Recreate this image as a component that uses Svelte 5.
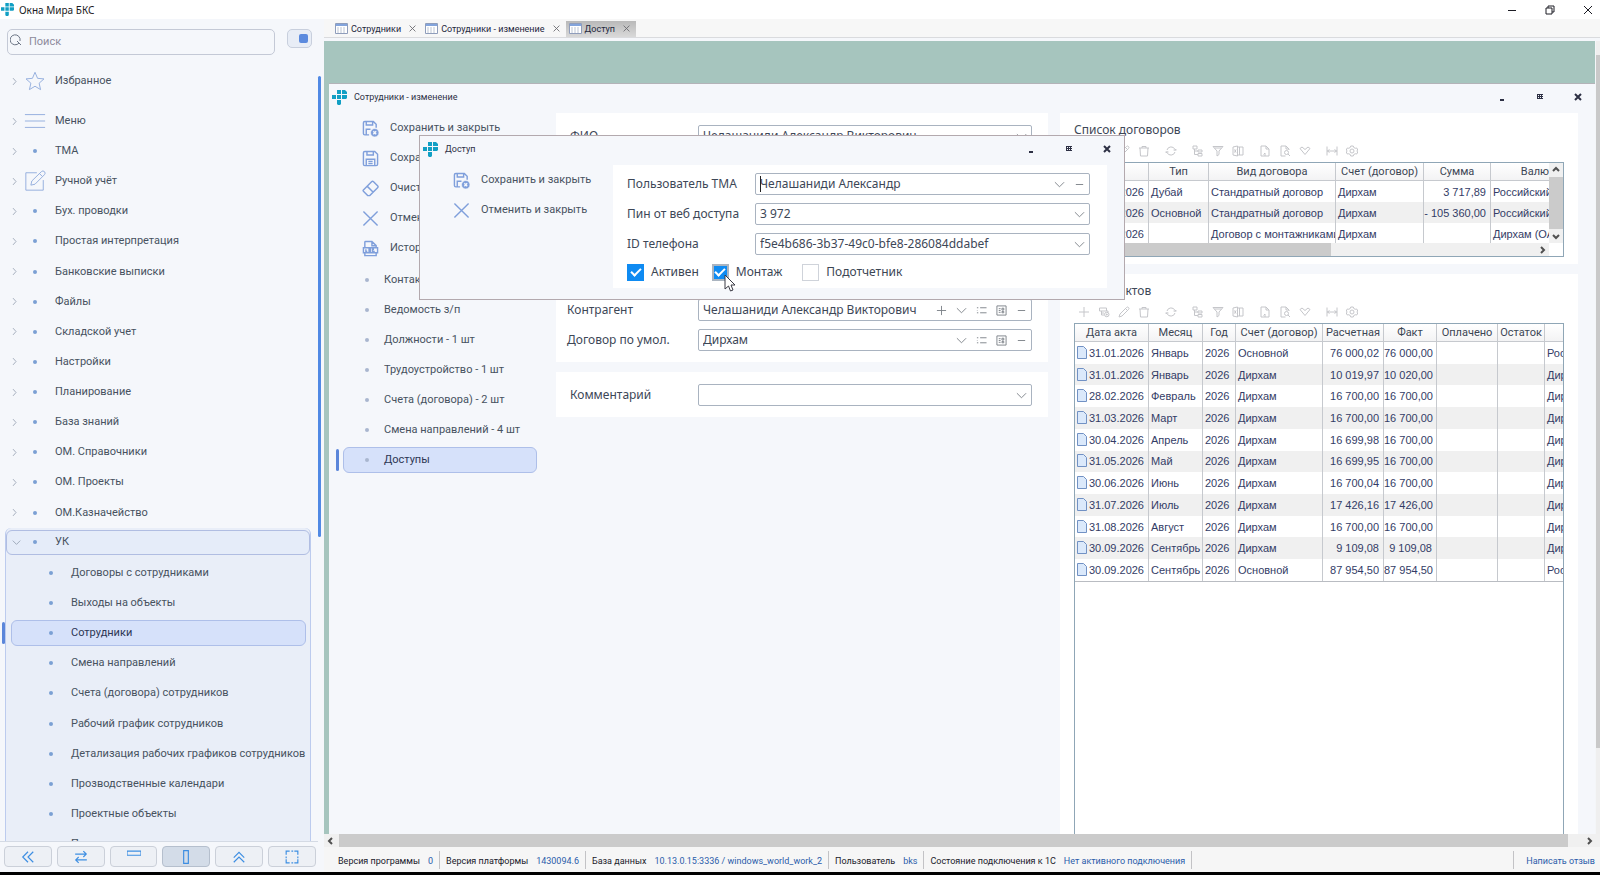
<script>
    const icons = {
        star: "M12 2.5l2.8 6.6 7 .6-5.3 4.7 1.6 7-6.1-3.7-6.1 3.7 1.6-7L2.2 9.7l7-.6z",
        menu: "M1 5h22M1 12h22M1 19h22",
        edit: "M14 3H2v19h19V11M7.500 16.500l1-4.500L19 1.800a2 2 0 0 1 3.300 3.300L12 15.500zM17 4l3 3",
        saveClose: "M10 21H4a2 2 0 0 1-2-2V4a2 2 0 0 1 2-2h12l4 4v5M6 2v5h9V2M6 21v-8h6",
        save: "M2 4a2 2 0 0 1 2-2h14l4 4v14a2 2 0 0 1-2 2H4a2 2 0 0 1-2-2zM7 2v5h9V2M6 22v-9h12v9M9 16h6M9 19h6",
        erase: "M2 14L13.500 2.500a2 2 0 0 1 2.800 0L22 8.200a2 2 0 0 1 0 2.800L11 22H8l-6-6a1.500 1.500 0 0 1 0-2zM7.500 9l8 8",
        cross: "M2 2l20 20M22 2L2 22",
        log: "M4 10V3a1 1 0 0 1 1-1h9l6 6v2M14 2v6h6M2 11h20v7H2zM4 18v4h16v-4M5.500 13v3h2M10 13h2v3h-2zM17 13h-2v3h2v-1",
        plus: "M12 2v20M2 12h20",
        minus: "M4 12h16",
        down: "M2 7l10 10L22 7",
        right: "M8 3l8 9-8 9",
        list: "M2 6h3M2 12h1M2 17h3M9 6h14M9 17h14",
        card: "M2 2h20v20H2zM6 8h4M6 12h4M6 16h4M13 7h4v4h-4zM13 14h4v3h-4z",
        copy: "M3 4h14v6H3zM7 10v4h5M7 14v4h5M17 10h3v3M13 17a4.500 4.500 0 1 0 9 0a4.500 4.500 0 1 0-9 0M17.500 15v4M15.500 17h4",
        pencil: "M2 22l2-6L17 3a2.500 2.500 0 0 1 4 4L8 20zM15 5l4 4",
        trash: "M2 6h20M8 6V3h8v3M4 6l1 16h14l1-16",
        refresh: "M4 10A8.500 8.500 0 0 1 20 9M20 14A8.500 8.500 0 0 1 4 15M17 10h6M1 14h6M20 11l2-3M4 13l-2 3",
        tree: "M2 2h8v6H2zM5 8v11h7M5 12h7M12 10h8v4h-8zM12 17h8v5h-8z",
        filter: "M2 3h20l-8 9v7l-4 3V12zM5 6h14",
        excel: "M10 4h12v16H10M2 4l9-2v20l-9-2zM5 9l3 6M8 9l-3 6M15 4v16",
        doc: "M4 2h10l6 6v14H4zM14 2v6h6M12 22v-6l-3 3",
        find: "M20 10V8l-6-6H4v20h9M14 2v6h6M11 15a4 4 0 1 0 8 0a4 4 0 1 0-8 0M18 18l4 4",
        heart: "M2 7l4-3 6 5 6-5 4 3-10 12z",
        width: "M2 3v18M22 3v18M2 12h20M7 9l-4 3 4 3M17 9l4 3-4 3",
        gear: "M9.500 2h5l1 3 3 1.500 3-.5 2 4-2 2 2 2-2 4-3-.5-3 1.500-1 3h-5l-1-3-3-1.500-3 .5-2-4 2-2-2-2 2-4 3 .5 3-1.500zM8 12a4 4 0 1 0 8 0a4 4 0 1 0-8 0",
        collapse: "M12 3l-9 9 9 9M21 3l-9 9 9 9",
        swap: "M2 7h19M16 2l5 5-5 5M22 17H3M8 12l-5 5 5 5",
        bar: "M0 2h24v7H0z",
        column: "M8 1h8v22H8z",
        up: "M3 13l9-9 9 9M3 21l9-9 9 9",
        expand: "M2 8V2h6M16 2h6v6M22 16v6h-6M8 22H2v-6M11 2h3M11 22h3M2 11v3M22 11v3",
    };

    const sections = [
        { name: "ТМА" },
        { name: "Ручной учёт", icon: "edit" },
        { name: "Бух. проводки" },
        { name: "Простая интерпретация" },
        { name: "Банковские выписки" },
        { name: "Файлы" },
        { name: "Складской учет" },
        { name: "Настройки" },
        { name: "Планирование" },
        { name: "База знаний" },
        { name: "ОМ. Справочники" },
        { name: "ОМ. Проекты" },
        { name: "ОМ.Казначейство" },
    ];

    const subsections = [
        "Договоры с сотрудниками",
        "Выходы на объекты",
        "Сотрудники",
        "Смена направлений",
        "Счета (договора) сотрудников",
        "Рабочий график сотрудников",
        "Детализация рабочих графиков сотрудников",
        "Прозводственные календари",
        "Проектные объекты",
    ];

    const tabs = ["Сотрудники", "Сотрудники - изменение", "Доступ"];

    const actions = [
        ["saveClose", "Сохранить и закрыть"],
        ["save", "Сохранить"],
        ["erase", "Очистить"],
        ["cross", "Отменить"],
        ["log", "История"],
    ];

    const pages = [
        "Контакты",
        "Ведомость з/п",
        "Должности - 1 шт",
        "Трудоустройство - 1 шт",
        "Счета (договора) - 2 шт",
        "Смена направлений - 4 шт",
        "Доступы",
    ];

    const toolGroups = [
        ["plus", "copy", "pencil", "trash"],
        ["refresh"],
        ["tree", "filter", "excel"],
        ["doc", "find", "heart"],
        ["width", "gear"],
    ];

    const contractHead = ["Дата", "Тип", "Вид договора", "Счет (договор)", "Сумма", "Валюта"];
    const contracts = [
        ["01.01.2026", "Дубай", "Стандратный договор", "Дирхам", "3 717,89", "Российский рубль"],
        ["01.01.2026", "Основной", "Стандратный договор", "Дирхам", "- 105 360,00", "Российский рубль"],
        ["01.01.2026", "", "Договор с монтажниками", "Дирхам", "", "Дирхам (ОАЭ)"],
    ];

    const actHead = ["Дата акта", "Месяц", "Год", "Счет (договор)", "Расчетная", "Факт", "Оплачено", "Остаток", ""];
    const acts = [
        ["31.01.2026", "Январь", "2026", "Основной", "76 000,02", "76 000,00", "", "", "Российский"],
        ["31.01.2026", "Январь", "2026", "Дирхам", "10 019,97", "10 020,00", "", "", "Дирхам"],
        ["28.02.2026", "Февраль", "2026", "Дирхам", "16 700,00", "16 700,00", "", "", "Дирхам"],
        ["31.03.2026", "Март", "2026", "Дирхам", "16 700,00", "16 700,00", "", "", "Дирхам"],
        ["30.04.2026", "Апрель", "2026", "Дирхам", "16 699,98", "16 700,00", "", "", "Дирхам"],
        ["31.05.2026", "Май", "2026", "Дирхам", "16 699,95", "16 700,00", "", "", "Дирхам"],
        ["30.06.2026", "Июнь", "2026", "Дирхам", "16 700,04", "16 700,00", "", "", "Дирхам"],
        ["31.07.2026", "Июль", "2026", "Дирхам", "17 426,16", "17 426,00", "", "", "Дирхам"],
        ["31.08.2026", "Август", "2026", "Дирхам", "16 700,00", "16 700,00", "", "", "Дирхам"],
        ["30.09.2026", "Сентябрь", "2026", "Дирхам", "9 109,08", "9 109,08", "", "", "Дирхам"],
        ["30.09.2026", "Сентябрь", "2026", "Основной", "87 954,50", "87 954,50", "", "", "Российский"],
    ];

    const status = [
        ["Версия программы", "0"],
        ["Версия платформы", "1430094.6"],
        ["База данных", "10.13.0.15:3336 / windows_world_work_2"],
        ["Пользователь", "bks"],
        ["Состояние подключения к 1С", "Нет активного подключения"],
    ];

    const layoutButtons = ["collapse", "swap", "bar", "column", "up", "expand"];

    let selectedSection = $state("Сотрудники");
    let selectedPage = $state("Доступы");
    let active = $state(true);
    let mounting = $state(true);
    let accountable = $state(false);
</script>

{#snippet icon(name)}
    <svg class="icon" viewBox="0 0 24 24" aria-hidden="true">
        <path d={icons[name]} />
        {#if name === "saveClose"}
            <circle class="badge" cx="18" cy="18" r="6" />
            <path class="badge-cross" d="M16 16l4 4M20 16l-4 4" />
        {/if}
    </svg>
{/snippet}

{#snippet logo()}
    <svg class="logo" viewBox="0 0 15 15" aria-hidden="true">
        <path d="M5 0h4v4H5zM10 0h3l2 2v2h-5zM0 5h4v4H0zM5 5h4v4H5zM10 5h5v3l-1 1h-4zM5 10h4v4l-1 1H6l-1-1z" />
    </svg>
{/snippet}

{#snippet windowBar(title)}
    <header class="window-bar">
        {@render logo()}
        <span class="window-title">{title}</span>
        <button type="button" aria-label="Свернуть"><svg viewBox="0 0 8 8"><path d="M2 7h4" /></svg></button>
        <button type="button" aria-label="Развернуть"><svg class="thin" viewBox="0 0 8 8"><path d="M1 1.500h6M1 3.500h6M1 5.500h6M1.500 1v5M3.500 1v5M5.500 1v5" /></svg></button>
        <button type="button" aria-label="Закрыть"><svg viewBox="0 0 8 8"><path d="M1 1l6 6M7 1L1 7" /></svg></button>
    </header>
{/snippet}

{#snippet field(id, label, value, buttons, focused = false)}
    <div class="form-row">
        <label for={id}>{label}</label>
        <div class="field">
            {#if focused}<i class="caret"></i>{/if}
            <input {id} type="text" {value} />
            {#each buttons as name}
                <button type="button" aria-label={name}>{@render icon(name)}</button>
            {/each}
        </div>
    </div>
{/snippet}

{#snippet tools()}
    <div class="tools">
        {#each toolGroups as group}
            <div class="tool-group">
                {#each group as name}
                    <button type="button" aria-label={name}>{@render icon(name)}</button>
                {/each}
            </div>
        {/each}
    </div>
{/snippet}

{#snippet scrollArrow(d)}
    <svg class="scroll-arrow" viewBox="0 0 8 8" aria-hidden="true"><path {d} /></svg>
{/snippet}

<div class="app">
    <header class="title-bar">
        {@render logo()}
        <h1>Окна Мира БКС</h1>
        <button type="button" aria-label="Свернуть"><svg viewBox="0 0 10 10"><path d="M1 5.500h8" /></svg></button>
        <button type="button" aria-label="Восстановить"><svg viewBox="0 0 10 10"><path d="M1 3h6v6H1zM3 3V1h6v6H7" /></svg></button>
        <button type="button" aria-label="Закрыть"><svg viewBox="0 0 10 10"><path d="M1 1l8 8M9 1L1 9" /></svg></button>
    </header>

    <div class="body">
        <aside class="sidebar">
            <div class="search-row">
                <div class="search">
                    <svg viewBox="0 0 12 12" aria-hidden="true"><path d="M9 9a5 5 0 1 1 1-2M7 7l4 4" /></svg>
                    <input type="search" placeholder="Поиск" aria-label="Поиск" />
                </div>
                <button type="button" class="toggle" aria-label="Закрепить"><i></i></button>
            </div>

            <nav class="tree">
                <button type="button" class="tree-row favorites">
                    <span class="chevron">{@render icon("right")}</span>
                    <span class="mark">{@render icon("star")}</span>
                    Избранное
                </button>
                <button type="button" class="tree-row">
                    <span class="chevron">{@render icon("right")}</span>
                    <span class="mark">{@render icon("menu")}</span>
                    Меню
                </button>
                <div class="sections">
                    {#each sections as { name, icon: mark }}
                        <button type="button" class="tree-row">
                            <span class="chevron">{@render icon("right")}</span>
                            <span class="mark">
                                {#if mark}{@render icon(mark)}{:else}<i class="dot"></i>{/if}
                            </span>
                            {name}
                        </button>
                    {/each}
                </div>
                <div class="opened">
                    <button type="button" class="tree-row opened-head">
                        <span class="chevron">{@render icon("down")}</span>
                        <span class="mark"><i class="dot"></i></span>
                        УК
                    </button>
                    {#each subsections as name}
                        <button
                            type="button"
                            class="tree-row child"
                            class:selected={selectedSection === name}
                            onclick={() => selectedSection = name}
                        >
                            <i class="dot"></i>
                            {name}
                        </button>
                    {/each}
                    <div class="cut"><button type="button" class="tree-row child"><i class="dot"></i>Проекты</button></div>
                </div>
            </nav>

            <footer class="layout-buttons">
                {#each layoutButtons as name}
                    <button type="button" class:pressed={name === "column"} aria-label={name}>{@render icon(name)}</button>
                {/each}
            </footer>
        </aside>
        <div class="side-scroll"><i></i></div>

        <main class="workspace">
            <div class="tabs">
                {#each tabs as tab, i}
                    <div class="tab" class:current={i === 2}>
                        <svg class="sheet" viewBox="0 0 13 11" aria-hidden="true">
                            <path class="sheet-page" d="M.5 .5h12v10H.5z" />
                            <path class="sheet-head" d="M1 1h11v2H1z" />
                            <path class="sheet-grid" d="M2 5h9M2 7h9M2 9h9" />
                        </svg>
                        <button type="button" class="tab-name">{tab}</button>
                        <button type="button" class="tab-close" aria-label="Закрыть">{@render icon("cross")}</button>
                    </div>
                {/each}
            </div>

            <div class="desk-row">
                <div class="desktop">
                    <section class="window">
                        {@render windowBar("Сотрудники - изменение")}
                        <div class="window-body">
                            <nav class="menu">
                                {#each actions as [name, text]}
                                    <button type="button" class="action">{@render icon(name)}{text}</button>
                                {/each}
                                <div class="pages">
                                    {#each pages as page}
                                        <button
                                            type="button"
                                            class="page"
                                            class:selected={selectedPage === page}
                                            onclick={() => selectedPage = page}
                                        >
                                            <i class="dot"></i>
                                            {page}
                                        </button>
                                    {/each}
                                </div>
                            </nav>

                            <div class="column forms">
                                <div class="card">
                                    {@render field("fio", "ФИО", "Челашаниди Александр Викторович", ["down"])}
                                    <div class="links">
                                        {@render field("agent", "Контрагент", "Челашаниди Александр Викторович", ["plus", "down", "list", "card", "minus"])}
                                        {@render field("deal", "Договор по умол.", "Дирхам", ["down", "list", "card", "minus"])}
                                    </div>
                                </div>
                                <div class="card">
                                    {@render field("comment", "Комментарий", "", ["down"])}
                                </div>
                            </div>

                            <div class="column">
                                <div class="card lists">
                                    <h2>Список договоров</h2>
                                    {@render tools()}
                                    <div class="grid contracts">
                                        <div class="grid-main">
                                            <div class="clip">
                                                <table>
                                                    <thead>
                                                        <tr>{#each contractHead as name}<th>{name}</th>{/each}</tr>
                                                    </thead>
                                                    <tbody>
                                                        {#each contracts as row}
                                                            <tr>{#each row as cell, i}<td class:number={i === 0 || i === 4}>{cell}</td>{/each}</tr>
                                                        {/each}
                                                    </tbody>
                                                </table>
                                            </div>
                                            <div class="scroll-x">
                                                <i class="thumb"></i>
                                                {@render scrollArrow("M3 1l3 3-3 3")}
                                            </div>
                                        </div>
                                        <div class="scroll-y">
                                            {@render scrollArrow("M1 5l3-3 3 3")}
                                            <i class="thumb"></i>
                                            {@render scrollArrow("M1 3l3 3 3-3")}
                                        </div>
                                    </div>
                                </div>

                                <div class="card lists rest">
                                    <h2>Список актов</h2>
                                    {@render tools()}
                                    <div class="grid acts">
                                        <table>
                                            <thead>
                                                <tr>{#each actHead as name}<th>{name}</th>{/each}</tr>
                                            </thead>
                                            <tbody>
                                                {#each acts as row}
                                                    <tr>
                                                        {#each row as cell, i}
                                                            <td class:number={i === 0 || i === 4 || i === 5}>
                                                                {#if i === 0}
                                                                    <svg class="paper" viewBox="0 0 10 13" aria-hidden="true"><path d="M.5 .5h6l3 3v9h-9z" /></svg>
                                                                {/if}
                                                                {cell}
                                                            </td>
                                                        {/each}
                                                    </tr>
                                                {/each}
                                            </tbody>
                                        </table>
                                    </div>
                                </div>
                            </div>
                        </div>
                    </section>

                    <section class="dialog" role="dialog" aria-label="Доступ">
                        {@render windowBar("Доступ")}
                        <div class="dialog-body">
                            <nav class="menu">
                                <button type="button" class="action">{@render icon("saveClose")}Сохранить и закрыть</button>
                                <button type="button" class="action">{@render icon("cross")}Отменить и закрыть</button>
                            </nav>
                            <div class="card">
                                {@render field("user", "Пользователь ТМА", "Челашаниди Александр", ["down", "minus"], true)}
                                {@render field("pin", "Пин от веб доступа", "3 972", ["down"])}
                                {@render field("phone", "ID телефона", "f5e4b686-3b37-49c0-bfe8-286084ddabef", ["down"])}
                                <div class="checks">
                                    <label><input type="checkbox" bind:checked={active} />Активен</label>
                                    <label class="hovered">
                                        <input type="checkbox" bind:checked={mounting} />Монтаж
                                        <svg class="cursor" viewBox="0 0 12 18" aria-hidden="true"><path d="M1 1v14l3.500-3 2 5 2.500-1-2-5H11z" /></svg>
                                    </label>
                                    <label><input type="checkbox" bind:checked={accountable} />Подотчетник</label>
                                </div>
                            </div>
                        </div>
                    </section>
                </div>
                <div class="desk-scroll-y">
                    <i></i>
                </div>
            </div>
            <div class="desk-scroll-x">
                {@render scrollArrow("M5 1L2 4l3 3")}
                <i class="thumb"></i>
                {@render scrollArrow("M3 1l3 3-3 3")}
            </div>

            <footer class="status">
                {#each status as [name, value]}
                    <span class="status-item">{name}<b>{value}</b></span>
                {/each}
                <a href="#feedback">Написать отзыв</a>
            </footer>
        </main>
    </div>
</div>

<style>
    :global(body) {
        overflow: hidden;
        background: #000;
    }

    .app {
        display: flex;
        flex-direction: column;
        height: 100vh;
        box-sizing: border-box;
        border-bottom: 3px solid #000;
        background: #f5f7fb;
        color: #3c4654;
        font: 11px/16px Roboto, "Noto Sans", sans-serif;
    }

    button, input {
        margin: 0;
        padding: 0;
        border: none;
        background: none;
        color: inherit;
        font: inherit;
        outline: none;
    }

    svg {
        display: block;
        fill: none;
        stroke: currentColor;
    }

    h1, h2 {
        margin: 0;
        font-weight: normal;
    }

    .logo {
        width: 15px;
        height: 15px;
        fill: #119fc4;
        stroke: none;
    }

    .title-bar {
        display: flex;
        align-items: center;
        height: 19px;
        flex: none;
        background: #fff;
        color: #1c1c24;
    }

    .title-bar .logo {
        width: 13px;
        height: 13px;
        margin: 0 5px 0 1px;
    }

    .title-bar h1 {
        flex: 1;
        font: 10px/16px "Noto Sans", sans-serif;
    }

    .title-bar button {
        display: flex;
        justify-content: center;
        width: 38px;
    }

    .title-bar button:last-child {
        margin-right: -7px;
    }

    .title-bar button svg {
        width: 10px;
        height: 10px;
    }

    .body {
        display: flex;
        flex: 1;
        min-height: 0;
    }

    /* Sidebar */
    .sidebar {
        display: flex;
        flex-direction: column;
        width: 318px;
        flex: none;
    }

    .search-row {
        display: flex;
        align-items: flex-start;
        gap: 12px;
        padding: 10px 6px 11px 7px;
    }

    .search {
        display: flex;
        flex: 1;
        height: 24px;
        border: 1px solid #c4c9d6;
        border-radius: 5px;
    }

    .search svg {
        width: 12px;
        height: 12px;
        margin: 4px 7px 0 2px;
        color: #6b7484;
    }

    .search input {
        flex: 1;
        min-width: 0;
    }

    .search input::placeholder {
        color: #8d8a9c;
    }

    .toggle {
        display: flex;
        justify-content: flex-end;
        width: 25px;
        height: 19px;
        padding: 4px 3px;
        box-sizing: border-box;
        border: 1px solid #c8cfdd;
        border-radius: 5px;
        background: #e8edf6;
    }

    .toggle i {
        width: 9px;
        height: 9px;
        border-radius: 2px;
        background: #5b8ade;
    }

    .tree {
        display: flex;
        flex-direction: column;
        flex: 1;
        min-height: 0;
        padding: 0 5px;
        border-bottom: 1px solid #d4dae4;
    }

    .tree-row {
        display: flex;
        align-items: center;
        flex: 1 1 0;
        min-height: 0;
        min-width: 0;
        box-sizing: border-box;
        text-align: left;
        white-space: nowrap;
        color: #47525f;
    }

    .tree > .tree-row {
        flex: none;
        height: 30px;
    }

    .tree > .favorites {
        margin-bottom: 10px;
    }

    .sections {
        display: flex;
        flex-direction: column;
        flex: 13 1 0;
        min-height: 0;
    }

    .opened {
        display: flex;
        flex-direction: column;
        flex: 10 1 12px;
        min-height: 0;
        margin-right: 2px;
        border: 1px solid #bccbee;
        border-width: 0 1px;
        border-radius: 6px 6px 0 0;
        background: #e9eef8;
    }

    .chevron .icon {
        width: 9px;
        height: 9px;
        margin: 0 5px;
        color: #8a95a8;
        stroke-width: 2;
    }

    .mark {
        display: flex;
        justify-content: center;
        width: 22px;
        margin-right: 9px;
    }

    .mark .icon {
        width: 22px;
        height: 22px;
        color: #8fabdc;
        stroke-width: 1;
    }

    .dot {
        width: 4px;
        height: 4px;
        flex: none;
        border-radius: 50%;
        background: #7ba0d4;
    }

    .opened-head {
        margin: 2px 0;
        border: 1px solid #b0bde2;
        border-radius: 6px;
        background: #e5ecf9;
    }

    .opened-head .chevron .icon {
        margin-right: 3px;
    }

    .child {
        gap: 18px;
        margin: 3px 4px 2px 5px;
        padding-left: 37px;
        border: 1px solid transparent;
        border-radius: 6px;
    }

    .cut {
        display: flex;
        height: 12px;
        flex: none;
        overflow: hidden;
    }

    .cut .tree-row {
        height: 26px;
        margin-top: 2px;
    }

    .layout-buttons {
        display: grid;
        grid-template-columns: repeat(6, 1fr);
        gap: 5px;
        padding: 4px 2px 5px 4px;
    }

    .layout-buttons button {
        display: flex;
        align-items: center;
        justify-content: center;
        height: 21px;
        border: 1px solid #cbd0d9;
        border-radius: 4px;
        background: #edf0f5;
        color: #3d8ee2;
    }

    .layout-buttons .pressed {
        border-color: #b5bfcd;
        background: #d3dce8;
    }

    .layout-buttons .icon {
        width: 14px;
        height: 14px;
        stroke-width: 2;
    }

    .side-scroll {
        width: 6px;
        flex: none;
    }

    .side-scroll i {
        display: block;
        width: 3px;
        height: 54%;
        margin-top: 57px;
        border-radius: 2px;
        background: #5089e4;
    }

    /* Workspace */
    .workspace {
        display: flex;
        flex-direction: column;
        flex: 1;
        min-width: 0;
    }

    .tabs {
        display: flex;
        align-items: center;
        height: 17px;
        flex: none;
        margin-bottom: 3px;
        padding: 1px 0 0 8px;
        border-bottom: 1px solid #dadbde;
        background: #f7f7f7;
        color: #23263c;
    }

    .tab {
        display: flex;
        align-items: center;
        gap: 3px;
        height: 16px;
        padding: 0 6px 0 3px;
    }

    .tab.current {
        background: linear-gradient(#b9b9b9, #d9d9d9);
    }

    .sheet {
        width: 13px;
        height: 11px;
    }

    .sheet-page {
        fill: #fff;
        stroke: #8f9dbb;
    }

    .sheet-head {
        fill: #83a4dc;
        stroke: none;
    }

    .sheet-grid {
        stroke: #bcc5d4;
        stroke-dasharray: 2 1;
    }

    .tab-name {
        font-size: 9px;
    }

    .tab-close .icon {
        width: 7px;
        height: 7px;
        margin-left: 5px;
        color: #6a6a70;
        stroke-width: 3;
    }

    .desk-row {
        display: flex;
        flex: 1;
        min-height: 0;
    }

    .desktop {
        position: relative;
        display: flex;
        flex: 1;
        min-width: 0;
        padding: 42px 0 0 5px;
        background: #a6c5be;
    }

    .desk-scroll-y {
        width: 5px;
        box-sizing: border-box;
        padding-top: 14px;
        border-left: 1px solid #f4f6f8;
        background: #efefef;
    }

    .desk-scroll-y i {
        display: block;
        height: 89%;
        background: #c9c9c9;
    }

    .desk-scroll-x {
        display: flex;
        align-items: center;
        height: 13px;
        flex: none;
        padding-right: 4px;
        background: #f0f0f0;
    }

    .scroll-arrow {
        width: 8px;
        height: 8px;
        flex: none;
        margin: 3px;
        color: #505050;
        stroke-width: 2;
    }

    .thumb {
        background: #cbcbcb;
    }

    .desk-scroll-x .thumb {
        flex: 1;
        align-self: stretch;
        margin: 0 14px 0 1px;
    }

    .window {
        display: flex;
        flex-direction: column;
        flex: 1;
        min-width: 0;
        border-top: 1px solid #b3b3b8;
        background: #f5f7fb;
    }

    .window-bar {
        display: flex;
        align-items: center;
        height: 26px;
        flex: none;
        padding: 0 10px 3px 3px;
        color: #2d3044;
    }

    .window-title {
        flex: 1;
        margin-left: 7px;
        font-size: 9px;
    }

    .window-bar button {
        display: flex;
        justify-content: center;
        width: 14px;
        margin-left: 24px;
    }

    .window-bar button svg {
        width: 8px;
        height: 8px;
        stroke-width: 2;
    }

    .window-bar .thin {
        stroke-width: 1;
    }

    .window-body {
        display: grid;
        grid-template-columns: 227px 504fr 518fr;
        flex: 1;
        min-height: 0;
        padding-right: 17px;
    }

    .menu {
        display: flex;
        flex-direction: column;
        color: #47525f;
    }

    .action {
        display: flex;
        align-items: center;
        gap: 11px;
        height: 30px;
        padding-left: 33px;
        white-space: nowrap;
    }

    .action .icon {
        width: 17px;
        height: 17px;
        color: #7f9fdb;
        stroke-width: 2;
    }

    .badge {
        fill: #7f9fdb;
        stroke: #f5f7fb;
        stroke-width: 1;
    }

    .badge-cross {
        stroke: #f5f7fb;
        stroke-width: 2;
    }

    .pages {
        display: flex;
        flex-direction: column;
        gap: 4px;
        margin: 4px 19px 0 14px;
    }

    .page {
        display: flex;
        align-items: center;
        gap: 15px;
        height: 26px;
        box-sizing: border-box;
        padding-left: 21px;
        border: 1px solid transparent;
        border-radius: 6px;
    }

    .page .dot {
        background: #a9b6cf;
    }

    .selected {
        position: relative;
        border-color: #aebfe9;
        background: #d6e1fa;
        color: #2c3554;
    }

    .selected::before {
        content: "";
        position: absolute;
        left: -10px;
        top: 1px;
        bottom: 1px;
        width: 3px;
        border-radius: 2px;
        background: #5b86da;
    }

    .page.selected::before {
        left: -8px;
    }

    .column {
        display: flex;
        flex-direction: column;
        gap: 10px;
        min-width: 0;
    }

    .forms {
        margin-right: 12px;
    }

    .card {
        padding: 12px 16px 11px 14px;
        background: #fff;
    }

    .form-row {
        display: flex;
        align-items: center;
        height: 22px;
        margin-bottom: 8px;
        color: #3d4757;
        font: 12px/16px "Noto Sans", sans-serif;
    }

    .forms .form-row:last-child {
        margin-bottom: 0;
    }

    .form-row label {
        width: 128px;
        flex: none;
        white-space: nowrap;
    }

    .links {
        margin: 152px 0 0 -3px;
    }

    .links label {
        width: 131px;
    }

    .field {
        position: relative;
        display: flex;
        align-items: center;
        flex: 1;
        min-width: 0;
        height: 20px;
        border: 1px solid #a9b3c0;
        border-radius: 2px;
        background: #fff;
    }

    .field input {
        flex: 1;
        min-width: 0;
        padding-left: 4px;
    }

    .field button {
        display: flex;
        justify-content: center;
        width: 20px;
        color: #7b8087;
    }

    .field .icon {
        width: 11px;
        height: 11px;
        stroke-width: 2;
    }

    .caret {
        position: absolute;
        left: 4px;
        top: 2px;
        width: 1px;
        height: 16px;
        background: #222;
    }

    .lists {
        padding: 7px 14px;
        overflow: hidden;
    }

    .lists h2 {
        color: #3d4757;
        font: 12px/20px "Noto Sans", sans-serif;
    }

    .rest {
        display: flex;
        flex-direction: column;
        flex: 1;
        min-height: 0;
        padding-bottom: 0;
    }

    .tools {
        display: flex;
        gap: 7px;
        height: 22px;
        flex: none;
    }

    .tool-group {
        display: flex;
    }

    .tools button {
        display: flex;
        align-items: center;
        justify-content: center;
        width: 20px;
    }

    .tools .icon {
        width: 12px;
        height: 12px;
        color: #c5c6ca;
        stroke-width: 2;
    }

    .grid {
        border: 1px solid #8fa6b6;
        overflow: hidden;
    }

    .contracts {
        display: flex;
        height: 93px;
    }

    .grid-main {
        flex: 1;
        min-width: 0;
    }

    .clip {
        height: 80px;
        overflow: hidden;
    }

    .acts {
        flex: 1;
        border-bottom: none;
    }

    .scroll-x {
        display: flex;
        height: 13px;
        background: #f0f0f0;
    }

    .scroll-x .thumb {
        width: 54%;
        margin-right: auto;
    }

    .scroll-y {
        display: flex;
        flex-direction: column;
        width: 14px;
        height: 80px;
        background: #f0f0f0;
    }

    .scroll-y .thumb {
        flex: 1;
    }

    table {
        table-layout: fixed;
        width: 560px;
        border-collapse: separate;
        border-spacing: 0;
    }

    .acts table {
        height: 258px;
        border-bottom: 1px solid #b9bcc2;
    }

    th {
        width: 60px;
        height: 18px;
        box-sizing: border-box;
        padding: 0;
        border-right: 1px solid #c6c9ce;
        border-bottom: 1px solid #c6c9ce;
        background: linear-gradient(#fff, #f3f3f4);
        font-weight: normal;
        text-align: center;
        white-space: nowrap;
    }

    td {
        height: 21px;
        padding: 0 0 0 2px;
        border-right: 1px solid #c6c9ce;
        color: #333c66;
        font: 11px/20px "Liberation Sans", Arial, sans-serif;
        white-space: nowrap;
        overflow: hidden;
    }

    .contracts td {
        height: 21px;
    }

    tbody tr:nth-child(even) td {
        background: #f0f0f0;
    }

    td.number {
        padding: 0 4px 0 0;
        text-align: right;
    }

    th:nth-child(1) { width: 74px; }

    .contracts th:nth-child(3) { width: 127px; }
    .contracts th:nth-child(4) { width: 88px; }
    .contracts th:nth-child(5) { width: 67px; }
    .contracts th:nth-child(6) { width: 100px; }
    .contracts table { width: 516px; }

    .acts th:nth-child(2) { width: 54px; }
    .acts th:nth-child(3) { width: 33px; }
    .acts th:nth-child(4) { width: 87px; }
    .acts th:nth-child(5) { width: 61px; }
    .acts th:nth-child(6) { width: 53px; }
    .acts th:nth-child(7) { width: 61px; }
    .acts th:nth-child(8) { width: 47px; }
    .acts th:nth-child(9) { width: 90px; }

    .paper {
        float: left;
        width: 10px;
        height: 13px;
        margin: 3px 0 0 2px;
        fill: #dbe9fb;
        stroke: #7191c4;
    }

    /* Dialog over the employee window */
    .dialog {
        position: absolute;
        left: 95px;
        top: 94px;
        width: 704px;
        border: 1px solid #b3a9ae;
        background: #f5f7fb;
    }

    .dialog-body {
        display: grid;
        grid-template-columns: 193px 1fr;
        padding: 0 17px 11px 0;
    }

    .dialog .card {
        padding: 8px 17px 7px 14px;
    }

    .checks {
        display: flex;
        gap: 13px;
        font: 12px/16px "Noto Sans", sans-serif;
    }

    .checks label {
        position: relative;
        display: flex;
        align-items: center;
        gap: 7px;
        height: 18px;
    }

    .checks label:last-child {
        margin-left: 7px;
    }

    .checks input {
        display: grid;
        place-items: center;
        width: 17px;
        height: 17px;
        box-sizing: border-box;
        border: 1px solid #cfd3da;
        background: #fff;
        appearance: none;
    }

    .checks input:checked {
        border-color: #0f8bf2;
        background: #0f8bf2;
    }

    .checks .hovered input {
        border: 2px solid #aab4c0;
    }

    .checks input:checked::after {
        content: "";
        width: 4px;
        height: 8px;
        margin-bottom: 3px;
        border: solid #fff;
        border-width: 0 2px 2px 0;
        transform: rotate(45deg);
    }

    .cursor {
        position: absolute;
        left: 12px;
        top: 11px;
        width: 12px;
        height: 18px;
        fill: #fff;
        stroke: #3a3a44;
    }

    .status {
        display: flex;
        align-items: center;
        height: 25px;
        flex: none;
        padding-left: 8px;
        background: #f6f6f6;
        color: #20202a;
        font-size: 9px;
        white-space: nowrap;
    }

    .status-item {
        padding: 2px 6px 0;
        border-right: 1px solid #c3c3c6;
    }

    .status b {
        margin-left: 8px;
        color: #2b5caa;
        font-weight: normal;
    }

    .status a {
        margin-left: auto;
        padding: 2px 5px 0 12px;
        border-left: 1px solid #c3c3c6;
        color: #2b5caa;
        text-decoration: none;
    }
</style>
